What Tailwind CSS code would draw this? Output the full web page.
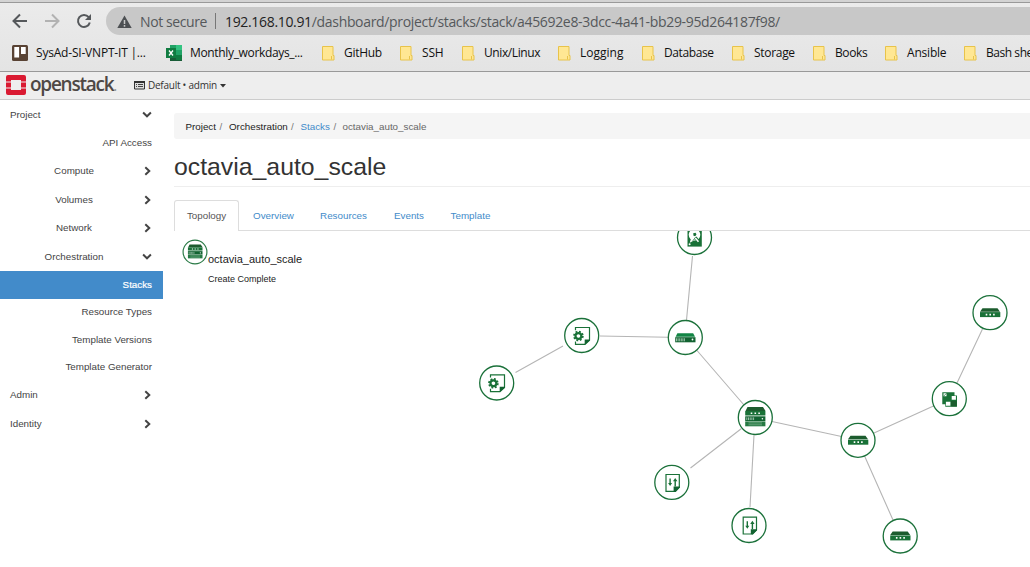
<!DOCTYPE html>
<html lang="en">
<head>
<meta charset="utf-8">
<title>octavia_auto_scale</title>
<script src="https://cdn.jsdelivr.net/npm/@tailwindcss/browser@4"></script>
</head>
<body class="w-[1030px] h-[567px] overflow-hidden bg-white font-['Liberation_Sans',Arial,sans-serif] text-[9.8px] text-[#333]">
<svg width="0" height="0" class="absolute">
  <defs>
    <symbol id="folder" viewBox="0 0 13 15"><path d="M.5.5h10.500v9h1v4.500H.5z" fill="#ffe793" stroke="#e8c34a"/><path d="M9.500 10v3.500" stroke="#e8c34a" fill="none"/></symbol>
    <symbol id="right" viewBox="0 0 8 10"><path d="M1.300 1.200 5.300 5l-4 3.800" fill="none" stroke="#444" stroke-width="2"/></symbol>
    <symbol id="down" viewBox="0 0 10 8"><path d="M1.100 1.600 5 5.300l3.900-3.700" fill="none" stroke="#444" stroke-width="2"/></symbol>
    <g id="router"><path d="M-7.500-4.500h15l2.500 3.500h-20z" fill="#1c5c2e"/><path d="M-10-.6h20.300v5h-20.300z" fill="#197137"/><path d="M-4.300 1h1.600v1.700h-1.600zM-.6 1h1.600v1.700h-1.600zM3.100 1h1.600v1.700h-1.600z" fill="#fff"/></g>
    <g id="server"><path d="M-7.800-4.500H8l1.800 3.500H-9.600z" fill="#128544"/><path d="M-10-.6h20.300v5.100h-20.300z" fill="#126331"/><path d="M-8.700.5v3M-7.100.5v3M-5.500.5v3M-3.900.5v3M-2.300.5v3M-.8.5v3" stroke="#a9cbb5" stroke-width=".9"/><circle cx="7.300" cy="1.700" r=".9" fill="#fff"/></g>
    <g id="stackicon"><path d="M-7.500-10.500h15.500l2.500 4h-20z" fill="#1c5c2e"/><path d="M-9.800-6.500h20.200v4.500h-20.200z" fill="#197137"/><path d="M-4.300-4.900h1.600v1.500h-1.600zM-.5-4.900h1.600v1.500h-1.600zM3.300-4.900h1.600v1.500h-1.600z" fill="#fff"/><path d="M-9.800-1.200h20.200v4.700h-20.200z" fill="#126331"/><path d="M-8.200-.1v2.700M-6.500-.1v2.700M-4.800-.1v2.700M-3.100-.1v2.700M-1.400-.1v2.700" stroke="#a9cbb5" stroke-width=".9"/><circle cx="7.400" cy="1.200" r=".8" fill="#fff"/><path d="M-9.800 3.900h20.200v4.900h-20.200z" fill="#257a43"/><path d="M-6.500 5.400h13.500M-6.500 7.300h13.500" stroke="#a9cbb5" stroke-width=".5"/></g>
    <g id="config"><path d="M-6.200-5.800V-8.500H7.800V4.200L3.300 8.300H-6.200V5.500" fill="none" stroke="#197137" stroke-width="1.200"/><path d="M8 3.500v1l-5 4.300V3.500z" fill="#126331"/><circle cx="-3.300" cy="0" r="5.600" fill="#fff"/><circle cx="-3.300" cy="0" r="2.900" fill="none" stroke="#197137" stroke-width="2.200"/><circle cx="-3.300" cy="0" r="4.400" fill="none" stroke="#197137" stroke-width="1.800" stroke-dasharray="1.850 1.606"/></g>
    <g id="policy"><path d="M-5.800-8.500H7.500V4.300L3.700 8.300H-5.800z" fill="#fff" stroke="#197137" stroke-width="1.200"/><path d="M8 3.500v1L3.500 8.900 1.800 8.400V3.500z" fill="#126331"/><path d="M-1.700-4.400V1M3.400 3.500V-3" stroke="#197137" stroke-width="1.400"/><path d="M-3.700.1h4l-2 2.900zM1.200-1.700h4.400L3.400-4.900z" fill="#197137"/></g>
    <g id="disk"><path d="M-7-10H7.300V8.800H-7z" fill="#197137"/><circle cy="-3" r="5.800" fill="#fff"/><path d="M-4.800 5-3.500 1l3.500 1.500z" fill="#fff"/><path d="M-1.300-4.500 1-5l1 1.500L.8-1.500-1-2z" fill="#197137"/><path d="M.8-.5 4.700 4.500" stroke="#197137" stroke-width="3"/><path d="M.8.300 4 4" stroke="#fff" stroke-width="1.500"/><path d="M-2 3 .3 1" stroke="#197137" stroke-width=".9"/><circle cx="-4.900" cy="6.500" r="1" fill="#fff"/></g>
    <g id="group"><path d="M-7-6.300H5.200V-3H7.700V8.300H-4V5.800H-7z" fill="#197137"/><path d="M-5.800-5.200h3v3h-3zM2.400-2.500h4.200v3.800H2.400zM-3.400 3.200h4.500v4h-4.500z" fill="#fff"/><path d="M-5.500-2.500l2.700-2.700" stroke="#197137" stroke-width=".7"/><path d="M1.800 2.400h5.500v5.500H1.800z" fill="#1c5c2e"/></g>
  </defs>
</svg>

<div class="h-[3px] bg-[#d3d3d3] border-b border-[#999]"></div>
<div class="h-[69px] bg-linear-to-b from-[#ebebeb] to-[#e4e4e4] border-b border-[#999] font-['Open_Sans','Noto_Sans',sans-serif]">
  <div class="flex h-[36px] pt-[4px]">
    <div class="w-[106px] shrink-0 h-[28px]">
      <svg width="106" height="28" fill="none">
        <path d="M27 14H14M20 7.500 13.500 14l6.500 6.500" stroke="#55585b" stroke-width="2"/>
        <path d="M45 14h13M52 7.500 58.500 14 52 20.500" stroke="#b2b2b2" stroke-width="2"/>
        <path d="M88.700 10.200A6 6 0 1 0 89.800 15.500" stroke="#55585b" stroke-width="2"/><path d="M91 7v6h-6z" fill="#55585b"/>
      </svg>
    </div>
    <div class="flex-1 h-[28px] bg-[#c8c8c8] rounded-l-full flex items-center pl-[11px] text-[14px] whitespace-nowrap text-[#55585b]">
      <svg width="15" height="13"><path d="M7.500.5 14.700 13H.3z" fill="#4d5053"/><path d="M7.500 5v4M7.500 10v1.700" stroke="#c8c8c8" stroke-width="1.500"/></svg>
      <span class="ml-2 w-[75px] tracking-[-0.4px]">Not secure</span>
      <span class="w-px h-4 bg-[#777]"></span>
      <span class="ml-[9px] tracking-[-0.33px]"><span class="text-[#222]">192.168.10.91</span>/dashboard/project/stacks/stack/a45692e8-3dcc-4a41-bb29-95d264187f98/</span>
    </div>
  </div>
  <div class="flex h-[28px] items-center pl-3 text-[12px] text-[#111] whitespace-nowrap overflow-hidden">
    <div class="flex items-center w-[154px] shrink-0">
      <svg width="16" height="16"><rect width="16" height="16" rx="1.500" fill="#594334"/><path d="M2.300 2h4.800v10.500H2.300zM9 2h4.700v7H9z" fill="#fff"/></svg>
      <span class="ml-2 tracking-[-0.2px]">SysAd-SI-VNPT-IT |...</span>
    </div>
    <div class="flex items-center w-[156px] shrink-0">
      <svg width="16" height="16"><path d="M4 0h6v8H4z" fill="#21a366"/><path d="M10 0h6v5h-6z" fill="#33c481"/><path d="M10 5h6v5h-6z" fill="#21a366"/><path d="M4 5h6v6H4z" fill="#107c41"/><path d="M4 10h12v6H4z" fill="#185c37"/><path d="M10 10h6v5h-6z" fill="#107c41"/><path d="M0 3h10v10H0z" fill="#107c41"/><path d="m3 5.500 4 5M7 5.500l-4 5" stroke="#fff" stroke-width="1.300"/></svg>
      <span class="ml-2 tracking-[-0.34px]">Monthly_workdays_...</span>
    </div>
    <div class="flex items-center w-[78px] shrink-0"><svg width="13" height="15"><use href="#folder"/></svg><span class="ml-[9px] tracking-[-0.3px]">GitHub</span></div>
    <div class="flex items-center w-[62px] shrink-0"><svg width="13" height="15"><use href="#folder"/></svg><span class="ml-[9px] tracking-[-0.2px]">SSH</span></div>
    <div class="flex items-center w-[96px] shrink-0"><svg width="13" height="15"><use href="#folder"/></svg><span class="ml-[9px] tracking-[-0.4px]">Unix/Linux</span></div>
    <div class="flex items-center w-[84px] shrink-0"><svg width="13" height="15"><use href="#folder"/></svg><span class="ml-[9px]">Logging</span></div>
    <div class="flex items-center w-[90px] shrink-0"><svg width="13" height="15"><use href="#folder"/></svg><span class="ml-[9px] tracking-[-0.4px]">Database</span></div>
    <div class="flex items-center w-[81px] shrink-0"><svg width="13" height="15"><use href="#folder"/></svg><span class="ml-[9px] tracking-[-0.3px]">Storage</span></div>
    <div class="flex items-center w-[72px] shrink-0"><svg width="13" height="15"><use href="#folder"/></svg><span class="ml-[9px] tracking-[-0.4px]">Books</span></div>
    <div class="flex items-center w-[79px] shrink-0"><svg width="13" height="15"><use href="#folder"/></svg><span class="ml-[9px] tracking-[-0.2px]">Ansible</span></div>
    <div class="flex items-center shrink-0"><svg width="13" height="15"><use href="#folder"/></svg><span class="ml-[9px] tracking-[-0.45px]">Bash she</span></div>
  </div>
</div>

<header class="h-[28px] bg-[#eee] border-b border-[#ccc] flex items-center pl-[6px]">
  <svg width="20" height="20" fill="#da1a32" class="-mt-px"><path d="M2 0h16a2 2 0 0 1 2 2v4.500h-5V5H5v1.500H0V2a2 2 0 0 1 2-2zM0 7.500h5v5H0zM15 7.500h5v5h-5zM0 13.500h5V15h10v-1.500h5V18a2 2 0 0 1-2 2H2a2 2 0 0 1-2-2z"/></svg>
  <span class="ml-[4px] w-[100px] h-[28px] leading-[24px] font-['Open_Sans',sans-serif] font-semibold text-[19px] tracking-[-1.250px] text-[#4e4845]">openstack<span class="text-[14px] text-[#999]">.</span></span>
  <svg width="11" height="9" class="ml-[4px]"><path d="M.5.5h10v7.500H.5z" fill="#ddd" stroke="#333"/><path d="M0 0h11v2H0z" fill="#333"/><path d="M2 3.500h1M4 3.500h5M2 5.500h1M4 5.500h5" stroke="#444"/></svg>
  <span class="ml-[3px] w-[69px] whitespace-nowrap font-['Open_Sans',sans-serif] text-[10px] tracking-[-0.25px] text-[#333]">Default • admin</span>
  <svg width="6" height="4" class="ml-[3px]"><path d="M0 0h6L3 3.500z" fill="#333"/></svg>
</header>

<div class="flex h-[467px]">
  <nav class="w-[163px] shrink-0 text-[#444]">
    <div class="h-[29px] flex items-center justify-between pl-[10px] pr-[11px]"><span class="pt-[2px]">Project</span><svg width="10" height="8"><use href="#down"/></svg></div>
    <div class="h-[28px] flex items-center justify-end pr-[11px]">API Access</div>
    <div class="h-[28px] flex items-center pr-[11px]"><span class="w-[148px] -mr-5 shrink-0 text-center">Compute</span><svg width="8" height="10" class="ml-auto"><use href="#right"/></svg></div>
    <div class="h-[29px] flex items-center pr-[11px]"><span class="w-[148px] -mr-5 pt-[2px] shrink-0 text-center">Volumes</span><svg width="8" height="10" class="ml-auto"><use href="#right"/></svg></div>
    <div class="h-[28px] flex items-center pr-[11px]"><span class="w-[148px] -mr-5 shrink-0 text-center">Network</span><svg width="8" height="10" class="ml-auto"><use href="#right"/></svg></div>
    <div class="h-[29px] flex items-center pr-[11px]"><span class="w-[148px] -mr-5 pt-[2px] shrink-0 text-center">Orchestration</span><svg width="10" height="8" class="ml-auto shrink-0"><use href="#down"/></svg></div>
    <div class="h-[28px] flex items-center justify-end pr-[11px] bg-[#428bca] text-white [-webkit-text-stroke:0.2px_white]">Stacks</div>
    <div class="h-[27px] flex items-center justify-end pr-[11px]">Resource Types</div>
    <div class="h-[27px] flex items-center justify-end pr-[11px] pt-[2px]">Template Versions</div>
    <div class="h-[28px] flex items-center justify-end pr-[11px]">Template Generator</div>
    <div class="h-[28px] flex items-center justify-between pl-[10px] pr-[11px]"><span>Admin</span><svg width="8" height="10"><use href="#right"/></svg></div>
    <div class="h-[29px] flex items-center justify-between pl-[10px] pr-[11px]"><span class="pt-[2px]">Identity</span><svg width="8" height="10"><use href="#right"/></svg></div>
  </nav>

  <main class="flex-1 min-w-0 pl-[11px] pt-[13px]">
    <div class="h-[26px] bg-[#f5f5f5] rounded-l-[3px] flex items-center pt-[2px] pl-[11.500px] whitespace-pre text-[#222]"><span class="w-[30px]">Project</span><span class="w-[13.500px] pl-[4px] text-[#777]">/</span><span class="w-[58px]">Orchestration</span><span class="w-[13.500px] pl-[4px] text-[#777]">/</span><span class="w-[29px] text-[#428bca]">Stacks</span><span class="w-[13px] pl-[4px] text-[#777]">/</span><span class="text-[#666]">octavia_auto_scale</span></div>
    <h1 class="h-[48px] border-b border-[#eee] pt-[12px] leading-[31px] text-[24.800px] text-[#333]">octavia_auto_scale</h1>
    <div class="h-[44px] pt-[13px] border-b border-[#ddd] flex items-stretch text-[#428bca]">
      <span class="relative -mb-px w-[65px] h-[31px] bg-white border border-b-0 border-[#ddd] rounded-t-[3px] flex items-center justify-center text-[#555]">Topology</span>
      <span class="w-[69px] pt-[2px] flex items-center justify-center">Overview</span>
      <span class="w-[71px] pt-[2px] flex items-center justify-center">Resources</span>
      <span class="w-[60px] pt-[2px] flex items-center justify-center">Events</span>
      <span class="w-[63px] pt-[2px] flex items-center justify-center">Template</span>
    </div>
    <div class="relative h-[336px] overflow-hidden">
      <div class="flex pl-[8px] pt-[8px]">
        <svg width="26" height="26" viewBox="-18 -18 36 36" class="shrink-0"><circle r="16.500" fill="#fff" stroke="#2a7a46" stroke-width="1.600"/><use href="#stackicon"/></svg>
        <div class="pt-[12px] text-[#222]">
          <div class="h-[20px] leading-[16px] text-[11px]">octavia_auto_scale</div>
          <div class="leading-[16px] text-[9px] h-[16px]">Create Complete</div>
        </div>
      </div>
      <svg width="856" height="336" viewBox="174 231 856 336" class="absolute top-0 left-0">
        <path d="M692.500 256 686.500 320M668 337.300 600 336M563 346 515.500 372.500M697 350.500 744 405M772 421.500 841.500 436.500M741.500 428.500 690.500 468M754 435 750 507M874 433 933.500 406M957 383 982.500 329M865 457 893 520" stroke="#b5b5b5" stroke-width="1.100" fill="none"/>
        <g fill="#fff" stroke="#1b713a" stroke-width="1.300">
          <circle cx="694.500" cy="237.500" r="17"/><circle cx="685.300" cy="337.500" r="17"/><circle cx="581.700" cy="335.500" r="17"/><circle cx="496.700" cy="383" r="17"/><circle cx="755.300" cy="417.500" r="17"/><circle cx="858" cy="440.300" r="17"/><circle cx="949.300" cy="398.700" r="17"/><circle cx="990" cy="312.700" r="17"/><circle cx="900.200" cy="536" r="17"/><circle cx="671.800" cy="482.400" r="17"/><circle cx="749" cy="525.500" r="17"/>
        </g>
        <use href="#disk" x="694.500" y="237.800"/>
        <use href="#server" x="685.200" y="337.800"/>
        <use href="#config" x="581.700" y="336"/>
        <use href="#config" x="496.700" y="383.300"/>
        <use href="#stackicon" x="755" y="417.500"/>
        <use href="#router" x="858" y="440.300"/>
        <use href="#group" x="949.300" y="398.500"/>
        <use href="#router" x="990" y="312.700"/>
        <use href="#router" x="900.200" y="536"/>
        <use href="#policy" x="671.800" y="483"/>
        <use href="#policy" x="749" y="525.700"/>
      </svg>
    </div>
  </main>
</div>
</body>
</html>
